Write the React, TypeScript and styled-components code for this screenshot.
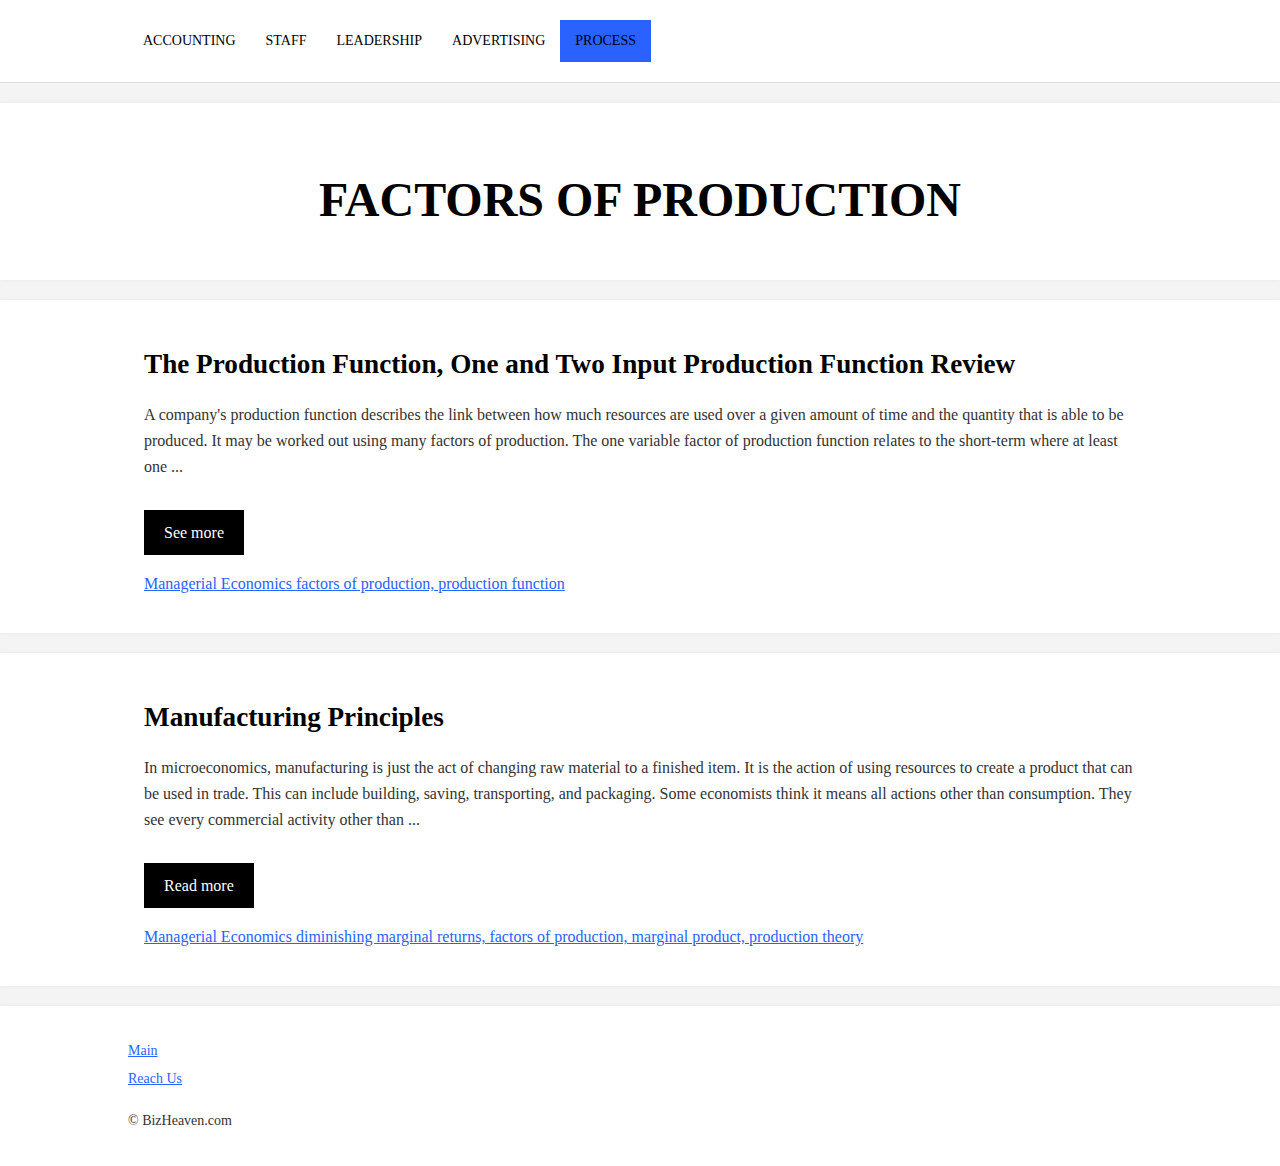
import React from "react";
import styled, { createGlobalStyle } from "styled-components";

const GlobalStyle = createGlobalStyle`
  html, body {
    margin: 0;
    padding: 0;
    background: #f4f4f4;
    font-family: "Liberation Serif", "Times New Roman", serif;
    color: #000;
  }
  * { box-sizing: border-box; }
`;

const Header = styled.header`
  background: #fff;
  border-bottom: 1px solid #dcdcdc;
  padding: 20px 0;
`;

const Container = styled.div`
  width: 1024px;
  margin: 0 auto;
`;

const Nav = styled.nav`
  display: flex;
  align-items: center;
`;

const NavItem = styled.a<{ $active?: boolean }>`
  display: block;
  padding: 12px 15px;
  font-size: 14px;
  line-height: 18px;
  text-transform: uppercase;
  color: #000;
  text-decoration: none;
  background: ${(p) => (p.$active ? "#2962ff" : "transparent")};
`;

const Panel = styled.section`
  background: #fff;
  margin-top: 20px;
  box-shadow: 0 0 4px rgba(0, 0, 0, 0.06);
`;

const Hero = styled(Panel)`
  padding: 70px 0 53px;
  text-align: center;
`;

const Title = styled.h1`
  margin: 0;
  font-size: 48px;
  line-height: 54px;
  font-weight: bold;
`;

const Article = styled(Panel)`
  padding: 49px 0 36px;
`;

const ArticleInner = styled(Container)`
  padding: 0 16px;
`;

const ArticleTitle = styled.h2`
  margin: 0 0 23px;
  font-size: 27.2px;
  line-height: 30px;
  font-weight: bold;
`;

const Excerpt = styled.p`
  margin: 0 0 30px;
  font-size: 16px;
  line-height: 26px;
  color: #333;
`;

const Button = styled.a`
  display: inline-block;
  background: #000;
  color: #fff;
  font-size: 16px;
  line-height: 25px;
  padding: 10px 20px;
  text-decoration: none;
`;

const Meta = styled.div`
  margin-top: 16px;
  font-size: 16px;
  line-height: 26px;
`;

const Link = styled.a`
  color: #2962ff;
  text-decoration: underline;
`;

const Footer = styled(Panel)`
  padding: 35px 0 35px;
`;

const FooterLinks = styled.div`
  display: flex;
  flex-direction: column;
  align-items: flex-start;
  gap: 8px;
  font-size: 14px;
  line-height: 20px;
`;

const Copyright = styled.p`
  margin: 22px 0 0;
  font-size: 14px;
  line-height: 20px;
  color: #333;
`;

const navItems = ["Accounting", "Staff", "Leadership", "Advertising", "Process"];

const posts = [
  {
    title: "The Production Function, One and Two Input Production Function Review",
    text:
      "A company's production function describes the link between how much resources are used over a given amount of time and the quantity that is able to be produced. It may be worked out using many factors of production. The one variable factor of production function relates to the short-term where at least one ...",
    button: "See more",
    category: "Managerial Economics",
    tags: ["factors of production", "production function"],
  },
  {
    title: "Manufacturing Principles",
    text:
      "In microeconomics, manufacturing is just the act of changing raw material to a finished item. It is the action of using resources to create a product that can be used in trade. This can include building, saving, transporting, and packaging. Some economists think it means all actions other than consumption. They see every commercial activity other than ...",
    button: "Read more",
    category: "Managerial Economics",
    tags: [
      "diminishing marginal returns",
      "factors of production",
      "marginal product",
      "production theory",
    ],
  },
];

export default function App() {
  return (
    <>
      <GlobalStyle />
      <Header>
        <Container>
          <Nav>
            {navItems.map((n) => (
              <NavItem key={n} href="#" $active={n === "Process"}>
                {n}
              </NavItem>
            ))}
          </Nav>
        </Container>
      </Header>
      <Hero>
        <Title>FACTORS OF PRODUCTION</Title>
      </Hero>
      {posts.map((p) => (
        <Article key={p.title}>
          <ArticleInner>
            <ArticleTitle>{p.title}</ArticleTitle>
            <Excerpt>{p.text}</Excerpt>
            <Button href="#">{p.button}</Button>
            <Meta>
              <Link href="#">{p.category + " "}</Link>
              <Link href="#">{p.tags.join(", ")}</Link>
            </Meta>
          </ArticleInner>
        </Article>
      ))}
      <Footer>
        <Container>
          <FooterLinks>
            <Link href="#">Main</Link>
            <Link href="#">Reach Us</Link>
          </FooterLinks>
          <Copyright>© BizHeaven.com</Copyright>
        </Container>
      </Footer>
    </>
  );
}
